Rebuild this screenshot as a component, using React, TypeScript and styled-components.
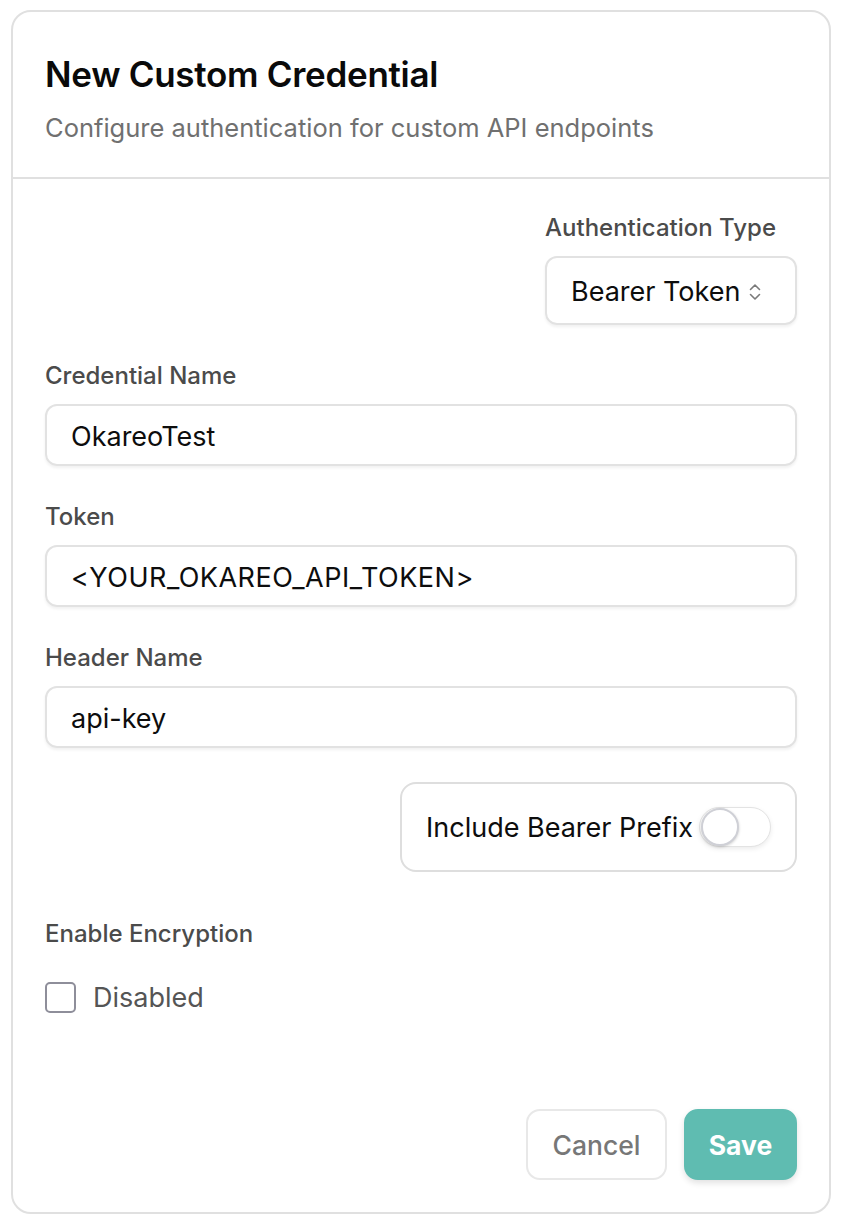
import React from "react";
import styled, { createGlobalStyle } from "styled-components";

const GlobalStyle = createGlobalStyle`
    body {
        margin: 0;
        background: #ffffff;
        font-family: Inter, "Noto Sans", "Liberation Sans", sans-serif;
    }
`;

const Page = styled.div`
    padding: 10px 13px 9px 11px;
`;

const Card = styled.div`
    border: 2px solid #e0e0e0;
    border-radius: 20px;
    background: #fff;
    overflow: hidden;
`;

const Header = styled.div`
    padding: 41px 32px 33px;
    border-bottom: 2px solid #e0e0e0;
`;

const Title = styled.h1`
    margin: 0;
    font-size: 35px;
    line-height: 42px;
    font-weight: 600;
    color: #0a0a0a;
    letter-spacing: -0.3px;
`;

const Subtitle = styled.p`
    margin: 17px 0 0;
    font-size: 25.5px;
    line-height: 32px;
    color: #707070;
`;

const Body = styled.div`
    padding: 35px 32px 32px;
    display: flex;
    flex-direction: column;
`;

const Field = styled.div<{ $align?: "end" }>`
    display: flex;
    flex-direction: column;
    align-items: ${(p) => (p.$align === "end" ? "flex-end" : "stretch")};
    gap: 14px;
    margin-bottom: 37px;
`;

const FieldInner = styled.div`
    display: flex;
    flex-direction: column;
    gap: 14px;
`;

const Label = styled.label`
    font-size: 24px;
    line-height: 28px;
    font-weight: 500;
    color: #4b4b4b;
`;

const Input = styled.div`
    height: 62px;
    box-sizing: border-box;
    border: 2px solid #e2e2e2;
    border-radius: 12px;
    box-shadow: 0 2px 3px rgba(0, 0, 0, 0.06);
    padding: 2px 24px 0;
    display: flex;
    align-items: center;
    font-size: 27px;
    color: #0d0d0d;
`;

const TokenText = styled.span`
    letter-spacing: 0.5px;
`;

const Select = styled(Input)`
    width: 252px;
    height: 69px;
    justify-content: space-between;
    padding-right: 33px;
`;

const ToggleRow = styled.div`
    display: flex;
    justify-content: flex-end;
    margin-top: -3px;
`;

const ToggleBox = styled.div`
    width: 397px;
    height: 90px;
    box-sizing: border-box;
    border: 2px solid #dedede;
    border-radius: 16px;
    padding: 0 24px 0 24px;
    display: flex;
    align-items: center;
    justify-content: space-between;
    font-size: 27px;
    color: #0d0d0d;
    white-space: nowrap;
`;

const Track = styled.div`
    flex: none;
    width: 72px;
    height: 40px;
    box-sizing: border-box;
    border: 1.5px solid #e3e3e3;
    border-radius: 20px;
    background: #fff;
    box-shadow: 0 2px 5px rgba(0, 0, 0, 0.08);
    display: flex;
    align-items: center;
    padding-left: 1px;
`;

const Knob = styled.div`
    width: 34px;
    height: 34px;
    border-radius: 50%;
    background: #fff;
    border: 2px solid #cfd0d6;
    box-shadow: 0 1px 3px rgba(0, 0, 0, 0.2);
`;

const Encryption = styled.div`
    display: flex;
    flex-direction: column;
    gap: 33px;
    margin-top: 48px;
`;

const CheckRow = styled.div`
    display: flex;
    align-items: center;
    gap: 17px;
    font-size: 27px;
    color: #555;
`;

const Box = styled.div`
    width: 31px;
    height: 31px;
    box-sizing: border-box;
    border: 2px solid #8e8e9a;
    border-radius: 5px;
`;

const Actions = styled.div`
    display: flex;
    justify-content: flex-end;
    gap: 17px;
    margin-top: 95px;
`;

const Button = styled.button<{ $primary?: boolean }>`
    height: 71px;
    box-sizing: border-box;
    border-radius: 14px;
    font-family: inherit;
    font-size: 26.5px;
    padding: 0;
    border: 2px solid ${(p) => (p.$primary ? "#5fbcb1" : "#e8e8e8")};
    background: ${(p) => (p.$primary ? "#5fbcb1" : "#fff")};
    color: ${(p) => (p.$primary ? "#fff" : "#777")};
    font-weight: ${(p) => (p.$primary ? 700 : 500)};
    box-shadow: ${(p) => (p.$primary ? "0 3px 6px rgba(0,0,0,0.12)" : "none")};
    width: ${(p) => (p.$primary ? "113px" : "141px")};
`;

const Chevrons = () => (
    <svg width="14" height="20" viewBox="0 0 14 20" fill="none" stroke="#7a7a7a" strokeWidth="1.6" strokeLinecap="round" strokeLinejoin="round">
        <path d="M2.5 7.5 L7 3 L11.5 7.5" />
        <path d="M2.5 12.5 L7 17 L11.5 12.5" />
    </svg>
);

const App = () => {
    return (
        <Page>
            <GlobalStyle />
            <Card>
                <Header>
                    <Title>New Custom Credential</Title>
                    <Subtitle>Configure authentication for custom API endpoints</Subtitle>
                </Header>
                <Body>
                    <Field $align="end">
                        <FieldInner>
                            <Label>Authentication Type</Label>
                            <Select>
                                Bearer Token
                                <Chevrons />
                            </Select>
                        </FieldInner>
                    </Field>
                    <Field>
                        <Label>Credential Name</Label>
                        <Input>OkareoTest</Input>
                    </Field>
                    <Field>
                        <Label>Token</Label>
                        <Input>
                            <TokenText>&lt;YOUR_OKAREO_API_TOKEN&gt;</TokenText>
                        </Input>
                    </Field>
                    <Field>
                        <Label>Header Name</Label>
                        <Input>api-key</Input>
                    </Field>
                    <ToggleRow>
                        <ToggleBox>
                            Include Bearer Prefix
                            <Track>
                                <Knob />
                            </Track>
                        </ToggleBox>
                    </ToggleRow>
                    <Encryption>
                        <Label>Enable Encryption</Label>
                        <CheckRow>
                            <Box />
                            Disabled
                        </CheckRow>
                    </Encryption>
                    <Actions>
                        <Button>Cancel</Button>
                        <Button $primary>Save</Button>
                    </Actions>
                </Body>
            </Card>
        </Page>
    );
};

export default App;
